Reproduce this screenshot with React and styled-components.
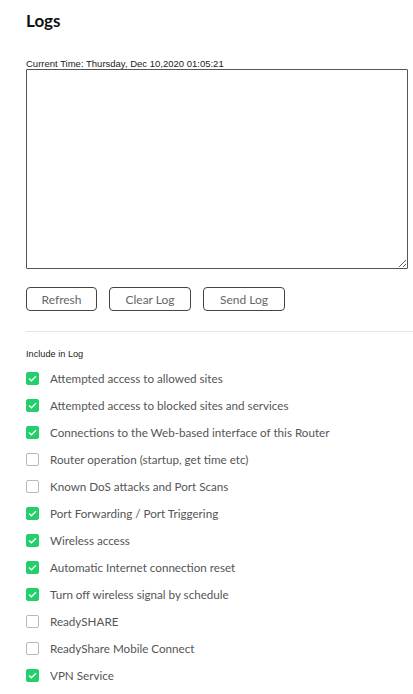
import React from 'react'
import styled, { createGlobalStyle } from 'styled-components'

const Global = createGlobalStyle`
  body {
    margin: 0;
    background: #ffffff;
    font-family: Lato, "Open Sans", sans-serif;
  }
`

const Page = styled.div`
  padding: 10px 0 0 26px;
  width: 387px;
`

const Title = styled.h1`
  margin: 0;
  font-family: Lato, sans-serif;
  font-size: 17px;
  font-weight: 700;
  color: #111;
  line-height: 22px;
`

const Small = styled.div`
  font-family: "Liberation Sans", Arial, sans-serif;
  font-size: ${p => p.size}px;
  color: #222;
  line-height: 11px;
  margin-top: ${p => p.top}px;
`

const LogArea = styled.textarea`
  display: block;
  box-sizing: border-box;
  width: 382px;
  height: 200px;
  margin: 0;
  border: 1px solid #555;
  border-radius: 1px;
  resize: both;
  font-family: "Liberation Mono", monospace;
  font-size: 11px;
`

const ButtonRow = styled.div`
  display: flex;
  gap: 12px;
  margin-top: 18px;
`

const Button = styled.button`
  box-sizing: border-box;
  height: 24px;
  width: ${p => p.w}px;
  background: #fff;
  border: 1px solid #444;
  border-radius: 4px;
  font-family: Lato, sans-serif;
  font-size: 12px;
  color: #666;
  padding: 0;
`

const Divider = styled.hr`
  border: none;
  border-top: 1px solid #e1e6ea;
  margin: 20px 0 0 0;
`

const List = styled.div`
  display: flex;
  flex-direction: column;
  gap: 13px;
  margin-top: 11px;
`

const Row = styled.label`
  display: flex;
  align-items: center;
  gap: 11px;
  height: 14px;
  font-family: Lato, sans-serif;
  font-size: 11.65px;
  color: #555;
`

const Box = styled.span`
  box-sizing: border-box;
  width: 13px;
  height: 13px;
  border-radius: 2px;
  display: flex;
  align-items: center;
  justify-content: center;
  background: ${p => (p.on ? '#22cf6b' : '#fff')};
  border: 1px solid ${p => (p.on ? '#22cf6b' : '#b9b9b9')};
`

const items = [
  ['Attempted access to allowed sites', true],
  ['Attempted access to blocked sites and services', true],
  ['Connections to the Web-based interface of this Router', true],
  ['Router operation (startup, get time etc)', false],
  ['Known DoS attacks and Port Scans', false],
  ['Port Forwarding / Port Triggering', true],
  ['Wireless access', true],
  ['Automatic Internet connection reset', true],
  ['Turn off wireless signal by schedule', true],
  ['ReadySHARE', false],
  ['ReadyShare Mobile Connect', false],
  ['VPN Service', true],
]

function Check({ on }) {
  return (
    <Box on={on}>
      {on && (
        <svg width="9" height="7" viewBox="0 0 9 7">
          <path d="M1 3.6 L3.4 5.8 L8 1.2" fill="none" stroke="#fff" strokeWidth="1.3" />
        </svg>
      )}
    </Box>
  )
}

export default function App() {
  return (
    <>
      <Global />
      <Page>
        <Title>Logs</Title>
        <Small top={26} size={9.5}>Current Time: Thursday, Dec 10,2020 01:05:21</Small>
        <LogArea readOnly />
        <ButtonRow>
          <Button w={71}>Refresh</Button>
          <Button w={82}>Clear Log</Button>
          <Button w={82}>Send Log</Button>
        </ButtonRow>
        <Divider />
        <Small top={17} size={9.2}>Include in Log</Small>
        <List>
          {items.map(([label, on]) => (
            <Row key={label}>
              <Check on={on} />
              {label}
            </Row>
          ))}
        </List>
      </Page>
    </>
  )
}
